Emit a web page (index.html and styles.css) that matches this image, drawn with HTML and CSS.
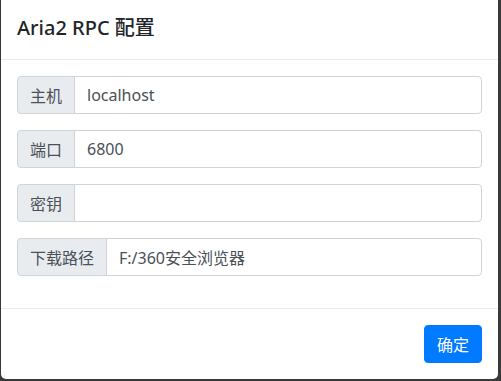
FILE: index.html
```html
<!DOCTYPE html>
<html lang="zh-CN">
<head>
  <meta charset="UTF-8" />
  <title>Aria2 RPC 配置</title>
  <link rel="stylesheet" href="styles.css">
</head>
<body>
  <div class="modal">
    <div class="modal-header">
      <h5 class="modal-title">Aria2 RPC 配置</h5>
    </div>
    <div class="modal-body">
      <div class="form-group">
        <span class="addon">主机</span>
        <input class="field" value="localhost" />
      </div>
      <div class="form-group">
        <span class="addon">端口</span>
        <input class="field" value="6800" />
      </div>
      <div class="form-group">
        <span class="addon">密钥</span>
        <input class="field" value="" />
      </div>
      <div class="form-group">
        <span class="addon">下载路径</span>
        <input class="field" value="F:/360安全浏览器" />
      </div>
    </div>
    <div class="modal-footer">
      <button class="btn-primary">确定</button>
    </div>
  </div>
</body>
</html>
```

FILE: styles.css
```css
html, body { margin: 0; height: 100%; }
body {
  background: #3a3a3a;
  font-family: "Noto Sans", "Noto Sans CJK SC", sans-serif;
  color: #212529;
  overflow: hidden;
}
.modal {
  margin-left: 1px;
  width: 497px;
  height: 379px;
  background: #fff;
  border-radius: 0 0 5px 5px;
  display: flex;
  flex-direction: column;
}
.modal-header {
  padding: 13px 16px 16px;
  border-bottom: 1px solid #e9ecef;
  height: 30px;
}
.modal-title {
  margin: 0;
  font-size: 20px;
  font-weight: 500;
  line-height: 30px;
}
.modal-body { padding: 16px 16px 0; }
.form-group {
  display: flex;
  height: 38px;
  margin-bottom: 16px;
}
.addon {
  display: flex;
  align-items: center;
  padding: 0 12px;
  font-size: 16px;
  color: #495057;
  background: #e9ecef;
  border: 1px solid #ced4da;
  border-radius: 4px 0 0 4px;
}
.field {
  flex: 1;
  min-width: 0;
  margin-left: -1px;
  padding: 0 12px;
  font-family: inherit;
  font-size: 16px;
  color: #495057;
  background: #fff;
  border: 1px solid #ced4da;
  border-radius: 0 4px 4px 0;
  outline: none;
}
.modal-footer {
  margin-top: auto;
  border-top: 1px solid #e9ecef;
  padding: 12px;
  display: flex;
  justify-content: flex-end;
}
.btn-primary {
  margin: 4px;
  height: 38px;
  padding: 0 12px;
  font-family: inherit;
  font-size: 16px;
  color: #fff;
  background: #007bff;
  border: 1px solid #007bff;
  border-radius: 4px;
}
```
